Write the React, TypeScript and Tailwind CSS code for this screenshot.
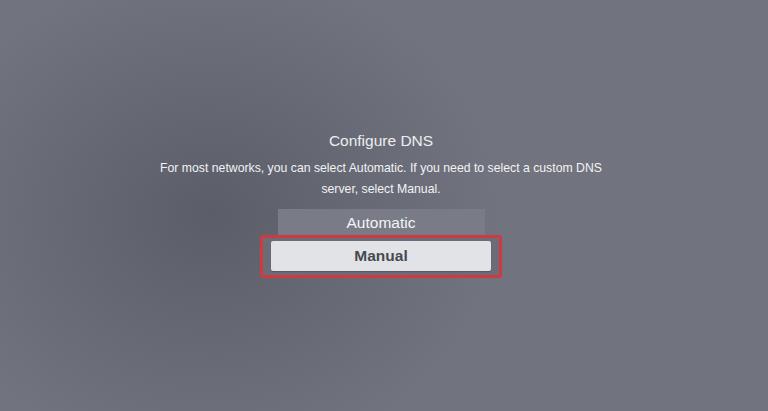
export default function App() {
  return (
    <div
      className="w-[768px] h-[411px] overflow-hidden flex flex-col items-center pt-[131px] pr-[6px] bg-[radial-gradient(ellipse_290px_250px_at_210px_215px,#5b5e69_0%,#656873_45%,#71747e_100%)] bg-[#71747e]"
      style={{ fontFamily: '"Liberation Sans", Arial, sans-serif' }}
    >
      <h1 className="text-[15.5px] leading-[20px] text-[#ededf0]">Configure DNS</h1>
      <p className="mt-[7px] w-[480px] text-center text-[12.25px] leading-[21px] text-[#f2f2f4]">
        For most networks, you can select Automatic. If you need to select a custom DNS server, select Manual.
      </p>
      <div className="mt-[9px] w-[242px] flex flex-col items-center">
        <div className="w-[207px] h-[26px] bg-[#797c87] flex items-center justify-center text-[15.5px] text-[#f4f4f6] pt-[2px]">
          Automatic
        </div>
        <div className="w-[242px] border-[3px] border-[#cf3a40] rounded-[3px] pt-[3px] pb-[4px] px-[8px] bg-[#6a6d78]">
          <div className="h-[30px] bg-[#e2e3e7] rounded-[2px] flex items-center justify-center text-[15.5px] text-[#474952] font-semibold shadow-[0_1px_1px_rgba(0,0,0,0.2)]">
            Manual
          </div>
        </div>
      </div>
    </div>
  );
}
